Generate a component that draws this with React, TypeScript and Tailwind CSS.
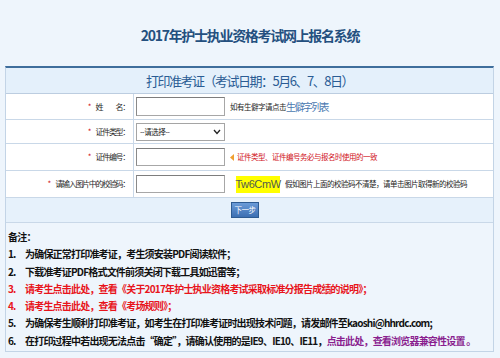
const notes = [
  { n: "1.", parts: [{ t: "为确保正常打印准考证，考生须安装PDF阅读软件；", c: "text-[#111]" }] },
  { n: "2.", parts: [{ t: "下载准考证PDF格式文件前须关闭下载工具如迅雷等；", c: "text-[#111]" }] },
  {
    n: "3.",
    red: true,
    parts: [{ t: "请考生点击此处，查看《关于2017年护士执业资格考试采取标准分报告成绩的说明》；", c: "text-[#e8141b]" }],
  },
  { n: "4.", red: true, parts: [{ t: "请考生点击此处，查看《考场规则》；", c: "text-[#e8141b]" }] },
  {
    n: "5.",
    parts: [{ t: "为确保考生顺利打印准考证，如考生在打印准考证时出现技术问题，请发邮件至kaoshi@hhrdc.com;", c: "text-[#111]" }],
  },
  {
    n: "6.",
    parts: [
      { t: "在打印过程中若出现无法点击“确定”，请确认使用的是IE9、IE10、IE11，", c: "text-[#111]" },
      { t: "点击此处，查看浏览器兼容性设置 。", c: "text-[#8a1f8f]" },
    ],
  },
];

const Label = ({ text }: { text: string }) => (
  <div className="w-[128px] h-full border-r border-[#c9d8e8] flex items-center justify-end pr-[4px]">
    <span className="text-[#d0101a] text-[8px] mr-[4px] leading-none">*</span>
    <span className="text-[8px] tracking-[-1.3px] text-[#2a2a2a] whitespace-pre">{text}</span>
  </div>
);

const TextBox = ({ h = "h-[19px]" }: { h?: string }) => (
  <div className={`w-[89px] ${h} bg-white border border-[#a7a7a7] border-t-[#7d7d7d] border-l-[#8a8a8a]`} />
);

export default function App() {
  return (
    <div className="w-[500px] h-[358px] bg-[#eef5fc] font-['Noto_Sans_CJK_SC',sans-serif] overflow-hidden">
      {/* title */}
      <div className="h-[66px] flex items-center justify-center pt-[4px]">
        <h1 className="text-[14px] font-bold text-[#24507f] tracking-[-1.3px]">
          2017年护士执业资格考试网上报名系统
        </h1>
      </div>

      <div className="ml-[5px] w-[489px] border-t-2 border-t-[#3f6e9c] border-x border-x-[#c3d4e6] border-b border-b-[#c3d4e6]">
        {/* header */}
        <div className="h-[26px] bg-[#e4f0fb] border-b border-[#bccde0] flex items-center justify-center">
          <span className="text-[13px] text-[#2a5c94] tracking-[-1.5px]">打印准考证（考试日期：5月6、7、8日）</span>
        </div>

        {/* name */}
        <div className="h-[26px] bg-white border-b border-[#c9d8e8] flex items-center">
          <Label text={"姓　　名："} />
          <div className="flex items-center pl-[2px]">
            <TextBox />
            <span className="ml-[5px] text-[7.5px] tracking-[-0.5px] text-[#222]">如有生僻字请点击</span>
            <span className="text-[10px] tracking-[-1.6px] text-[#4a78b0]">生僻字列表</span>
          </div>
        </div>

        {/* type */}
        <div className="h-[24px] bg-white border-b border-[#c9d8e8] flex items-center">
          <Label text="证件类型：" />
          <div className="flex items-center pl-[2px]">
            <div className="w-[89px] h-[18px] bg-white border border-[#a5a5a5] flex items-center justify-between pl-[3px] pr-[3px]">
              <span className="text-[7.5px] tracking-[-0.5px] text-[#222]">--请选择--</span>
              <svg width="8" height="6" viewBox="0 0 8 6" fill="none">
                <path d="M1 1l3 3.5L7 1" stroke="#222" strokeWidth="1.3" />
              </svg>
            </div>
          </div>
        </div>

        {/* id */}
        <div className="h-[27px] bg-white border-b border-[#c9d8e8] flex items-center">
          <Label text="证件编号：" />
          <div className="flex items-center pl-[2px]">
            <TextBox h="h-[18px]" />
            <svg className="ml-[5px] mr-[3px]" width="4" height="7" viewBox="0 0 4 7">
              <path d="M4 0L0 3.5 4 7z" fill="#f0a030" />
            </svg>
            <span className="text-[7.5px] tracking-[-0.5px] text-[#d0101a]">证件类型、证件编号务必与报名时使用的一致</span>
          </div>
        </div>

        {/* captcha */}
        <div className="h-[27px] bg-white border-b border-[#c9d8e8] flex items-center">
          <Label text="请输入图片中的校验码：" />
          <div className="flex items-center pl-[2px]">
            <TextBox h="h-[18px]" />
            <div className="ml-[11px] w-[44px] h-[17px] bg-[#ffff00] flex items-center justify-center">
              <span className="font-['Liberation_Sans',sans-serif] text-[11px] tracking-[-0.4px] text-[#4f5b4f]">Tw6CmW</span>
            </div>
            <span className="ml-[5px] text-[7.5px] tracking-[-0.5px] text-[#222]">
              假如图片上面的校验码不清楚，请单击图片取得新的校验码
            </span>
          </div>
        </div>

        {/* button */}
        <div className="h-[25px] bg-[#e6f1fb] border-b border-[#c9d8e8] flex items-center pl-[225px]">
          <button className="w-[28px] h-[16px] bg-gradient-to-b from-[#6a9bd8] to-[#3c6fb2] border border-[#2d5b92] text-white text-[7.5px] tracking-[-0.5px] leading-none">
            下一步
          </button>
        </div>

        {/* notes */}
        <div className="pt-[5px] pb-[2px] pl-[2px] text-[10px] font-bold tracking-[-0.8px] leading-[17.3px]">
          <div className="text-[#111]">备注：</div>
          {notes.map((row) => (
            <div key={row.n} className="flex whitespace-nowrap">
              <span className={`w-[17px] ${row.red ? "text-[#e8141b]" : "text-[#111]"}`}>{row.n}</span>
              <span>
                {row.parts.map((p, i) => (
                  <span key={i} className={p.c}>
                    {p.t}
                  </span>
                ))}
              </span>
            </div>
          ))}
        </div>
      </div>
    </div>
  );
}
